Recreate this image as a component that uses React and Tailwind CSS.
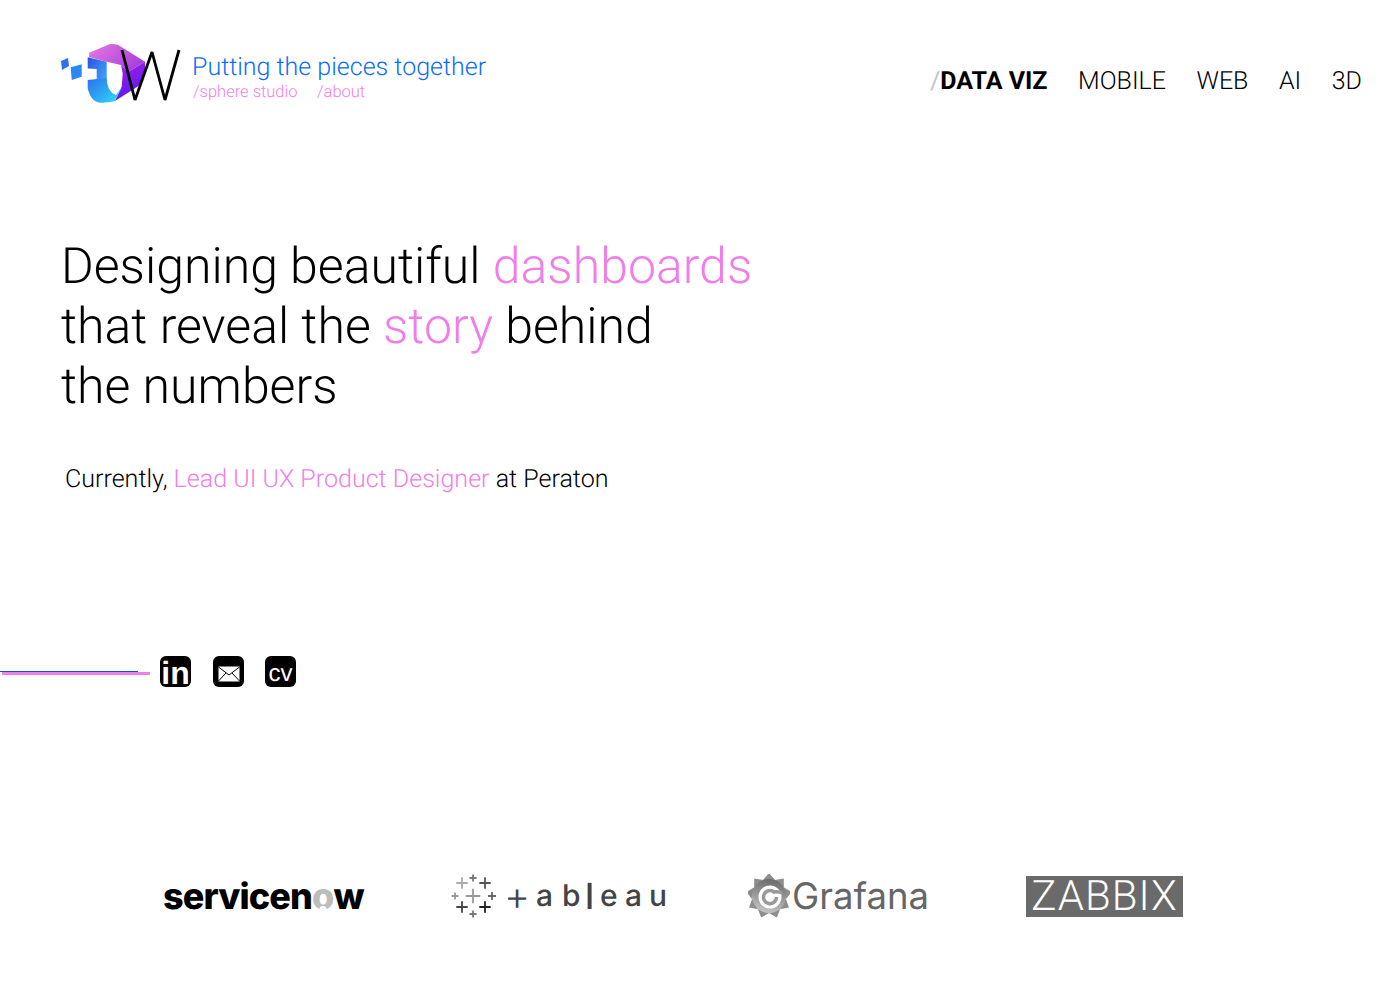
import React from "react";

const Pink = ({ children }) => <span className="text-[#f07ee8]">{children}</span>;

const LogoMark = () => (
  <svg width="122" height="62" viewBox="0 0 122 62" className="shrink-0">
    <defs>
      <linearGradient id="blueG" x1="0" y1="0" x2="1" y2="0.8">
        <stop offset="0" stopColor="#2a6fec" />
        <stop offset="1" stopColor="#2fd8fa" />
      </linearGradient>
      <linearGradient id="blueTop" x1="0" y1="0" x2="1" y2="0.7">
        <stop offset="0" stopColor="#2a50e4" />
        <stop offset="1" stopColor="#3f9cf4" />
      </linearGradient>
      <linearGradient id="purpleG" x1="0" y1="0" x2="0.3" y2="1">
        <stop offset="0" stopColor="#a51ee6" />
        <stop offset="1" stopColor="#5e18f2" />
      </linearGradient>
      <linearGradient id="pinkG" x1="0" y1="0" x2="1" y2="0.6">
        <stop offset="0" stopColor="#ea78e0" />
        <stop offset="1" stopColor="#a83fdc" />
      </linearGradient>
    </defs>
    <polygon points="1,19 8,16 9,24 2,28" fill="#2f72e8" />
    <polygon points="10.7,25.3 21.7,22.3 21.7,34.7 11.7,38" fill="#2b8af2" />
    <path d="M29.3 10.7 L50 2 Q54 1.5 58.3 3 L85 19.7 L68 30 L61 23 L46.7 19.7 L29 15 Z" fill="url(#pinkG)" />
    <path d="M85 19.7 L85 28 Q83 38 80 43 L55 59 L61.7 44.7 L62.7 31.3 L61 23 L68 30 Z" fill="url(#purpleG)" />
    <path d="M27.7 15.3 L46.7 19.7 L46.7 37 L36.7 38 L36.7 27 L27.7 26.5 Z" fill="url(#blueTop)" />
    <path d="M27.7 38 L46.7 36 Q47 50 56 53 L62 45 L55 59 Q48 61 40 60.7 Q31 60 27.7 46.3 Z" fill="url(#blueG)" />
    <polyline points="62,8 75,58 92,10 105,58 119,8" fill="none" stroke="#000" strokeWidth="2.8" strokeLinejoin="bevel" />
  </svg>
);

const LinkedInIcon = () => (
  <div className="w-[31px] h-[31px] rounded-[6px] bg-black flex items-center justify-center text-white font-['Liberation_Sans',sans-serif] font-bold text-[32px] leading-none pt-[2px]">
    in
  </div>
);

const MailIcon = () => (
  <div className="w-[31px] h-[31px] rounded-[6px] bg-black flex items-center justify-center pt-[5px]">
    <svg width="22" height="16" viewBox="0 0 22 16" fill="none" stroke="#fff" strokeWidth="1">
      <rect x="0.5" y="0.5" width="21" height="15" fill="#fff" stroke="none" />
      <path d="M0.5 1 L11 9 L21.5 1 M0.5 15 L8 7 M21.5 15 L14 7" stroke="#000" />
    </svg>
  </div>
);

const CvIcon = () => (
  <div className="w-[31px] h-[31px] -ml-[1px] rounded-[6px] bg-black flex items-center justify-center text-white font-['Liberation_Sans',sans-serif] text-[24px] leading-none pt-[5px]">
    cv
  </div>
);

const TableauMark = () => {
  const crosses = [
    [22, 4, 3.5, "#777"], [11, 9, 5.7, "#aaa"], [34, 9, 5.7, "#555"],
    [4, 22, 3.5, "#999"], [22, 22, 7.3, "#999"], [41, 22, 4, "#666"],
    [11, 33, 5.7, "#444"], [34, 33, 5.7, "#222"], [22, 40, 3.5, "#777"],
  ];
  return (
    <svg width="46" height="44" viewBox="0 0 46 44" className="shrink-0">
      {crosses.map(([x, y, r, c], i) => (
        <path key={i} d={`M${x - r} ${y}H${x + r}M${x} ${y - r}V${y + r}`} stroke={c} strokeWidth="1.8" />
      ))}
    </svg>
  );
};

const GrafanaMark = () => {
  const teeth = Array.from({ length: 9 }, (_, i) => i * 40);
  return (
    <svg width="42" height="44" viewBox="0 0 42 44" className="shrink-0">
      <defs>
        <linearGradient id="grafG" x1="0.6" y1="0" x2="0.4" y2="1">
          <stop offset="0" stopColor="#6a6a6a" />
          <stop offset="1" stopColor="#c4c4c4" />
        </linearGradient>
      </defs>
      {teeth.map((a) => (
        <polygon key={a} points="15,6 21,-1 27,6" fill="#8e8e8e" transform={`rotate(${a} 21 22)`} />
      ))}
      <circle cx="21" cy="22" r="17" fill="url(#grafG)" />
      <circle cx="22" cy="23" r="11.5" fill="#fff" />
      <path d="M34 19 Q30 17 26 18 A6.5 6.5 0 1 0 28.5 23" fill="none" stroke="#999" strokeWidth="3.5" />
    </svg>
  );
};

export default function App() {
  return (
    <div className="min-h-[996px] bg-white font-['Roboto',sans-serif] font-light text-black [text-rendering:geometricPrecision]">
      <header className="flex justify-between pt-[42px] pl-[60px] pr-[38px]">
        <div className="flex items-start">
          <LogoMark />
          <div className="ml-[10px] pt-[10px]">
            <div className="text-[25px] leading-[32px] text-[#0b6ef5]">Putting the pieces together</div>
            <div className="flex text-[16.5px] leading-[20px] text-[#f07ee8] -mt-[1px]">
              <span className="ml-[1px] w-[124px]">/sphere studio</span>
              <span>/about</span>
            </div>
          </div>
        </div>
        <nav className="flex gap-[30.5px] text-[25px] leading-[30px] pt-[25px]">
          <span className="font-bold">
            <span className="font-normal text-[#c4c4c4]">/</span>DATA VIZ
          </span>
          <span>MOBILE</span>
          <span>WEB</span>
          <span>AI</span>
          <span>3D</span>
        </nav>
      </header>

      <section className="pl-[61px] pt-[133px]">
        <h1 className="text-[50px] leading-[60px] font-light">
          Designing beautiful <Pink>dashboards</Pink>
          <br />
          that reveal the <Pink>story</Pink> behind
          <br />
          the numbers
        </h1>
        <p className="ml-[4px] mt-[48px] text-[25.05px] leading-[30px]">
          Currently, <Pink>Lead UI UX Product Designer</Pink> at Peraton
        </p>
      </section>

      <section className="flex items-center pt-[161px]">
        <div className="w-[150px] mr-[10px] mt-[2px]">
          <div className="h-px w-[138px] bg-[#0b50e0]" />
          <div className="h-[3px] w-[148px] ml-[2px] bg-[#f07ee8]" />
        </div>
        <div className="flex gap-[22px]">
          <LinkedInIcon />
          <MailIcon />
          <CvIcon />
        </div>
      </section>

      <section className="flex items-center pl-[163px] pt-[187px]">
        <div className="w-[288px] font-['Inter',sans-serif] font-extrabold text-[36px] leading-[44px] tracking-[-0.9px]">
          servicen
          <span className="relative text-[#bdbdbd]">
            o
            <span className="absolute left-1/2 -translate-x-1/2 bottom-[6px] w-[7px] h-[6px] rounded-full bg-white" />
          </span>
          w
        </div>
        <div className="w-[297px] flex items-center font-['Inter',sans-serif] font-medium text-[30px] leading-[40px] text-[#444]">
          <TableauMark />
          <span className="ml-[7px] w-[32px] text-[40px] font-light">+</span>
          <span className="w-[26px]">a</span>
          <span className="w-[23px]">b</span>
          <span className="w-[15px] text-[36px]">l</span>
          <span className="w-[25px]">e</span>
          <span className="w-[24px]">a</span>
          <span className="w-[17px]">u</span>
        </div>
        <div className="w-[278px] flex items-center">
          <GrafanaMark />
          <span className="ml-[2px] font-['Inter',sans-serif] font-normal text-[36.5px] leading-[44px] text-[#666]">Grafana</span>
        </div>
        <div className="w-[157px] h-[41px] bg-[#6a6a6a] text-white text-[42px] leading-[41px] text-center tracking-[1px]">ZABBIX</div>
      </section>
    </div>
  );
}
